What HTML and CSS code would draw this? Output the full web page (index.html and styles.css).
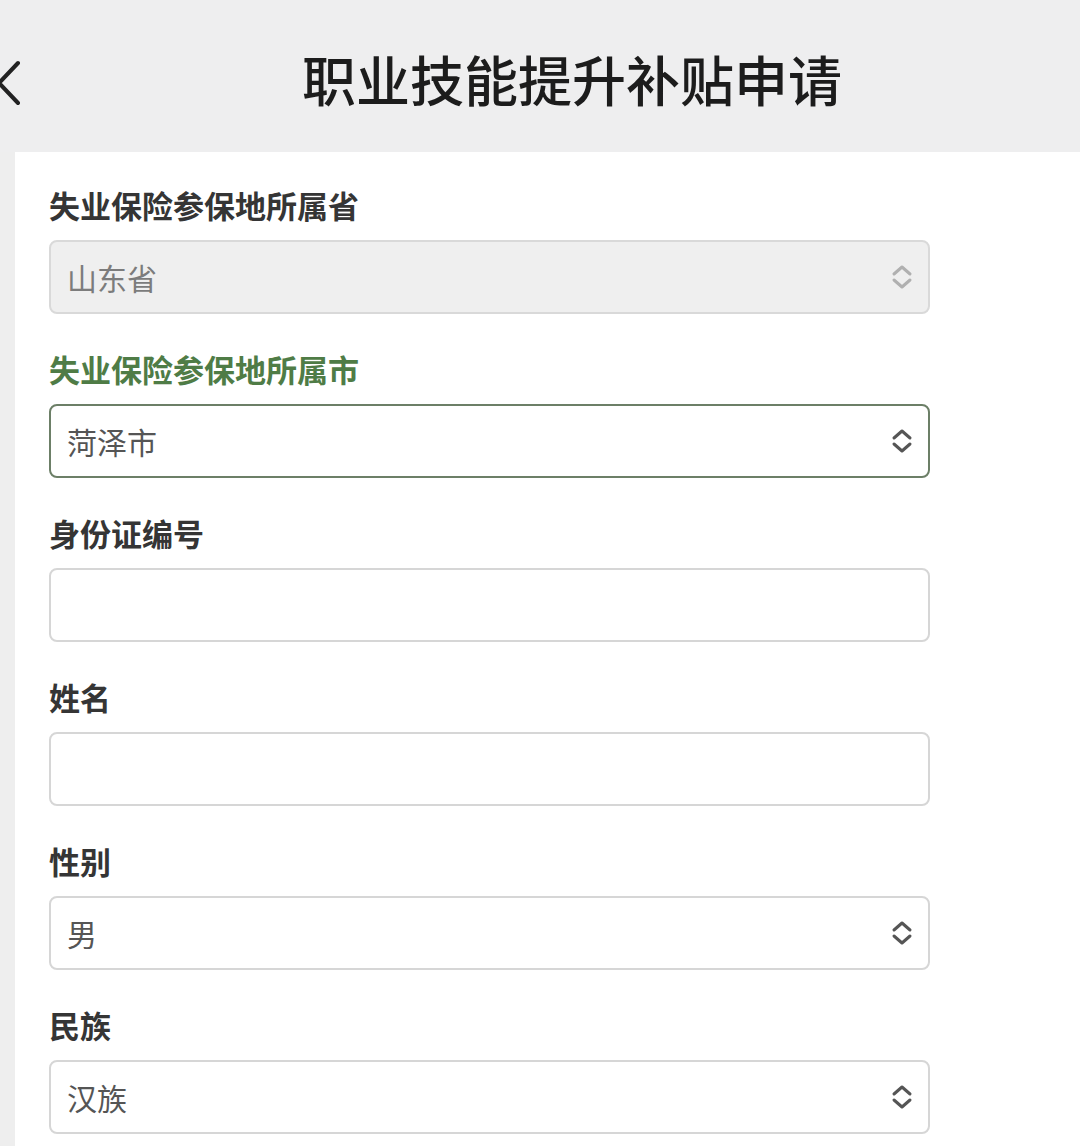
FILE: index.html
```html
<!DOCTYPE html>
<html lang="zh-CN">
<head>
<meta charset="utf-8">
<title>职业技能提升补贴申请</title>
<link rel="stylesheet" href="styles.css">
</head>
<body>
<header class="topbar">
  <svg class="back" width="24" height="46" viewBox="0 0 24 46"><polyline points="20,3 1,23 20,43" fill="none" stroke="#222" stroke-width="4" stroke-linecap="round" stroke-linejoin="round"/></svg>
  <h1 class="title">职业技能提升补贴申请</h1>
</header>
<div class="page">
  <div class="strip"></div>
  <form class="form">
    <div class="field">
      <label class="label">失业保险参保地所属省</label>
      <div class="box select disabled"><span class="value">山东省</span>
        <svg class="chev" width="22" height="26" viewBox="0 0 22 26"><polyline points="3,10 11,3 19,10" /><polyline points="3,16 11,23 19,16" /></svg></div>
    </div>
    <div class="field">
      <label class="label active">失业保险参保地所属市</label>
      <div class="box select focused"><span class="value">菏泽市</span>
        <svg class="chev" width="22" height="26" viewBox="0 0 22 26"><polyline points="3,10 11,3 19,10" /><polyline points="3,16 11,23 19,16" /></svg></div>
    </div>
    <div class="field">
      <label class="label">身份证编号</label>
      <div class="box"></div>
    </div>
    <div class="field">
      <label class="label">姓名</label>
      <div class="box"></div>
    </div>
    <div class="field">
      <label class="label">性别</label>
      <div class="box select"><span class="value">男</span>
        <svg class="chev" width="22" height="26" viewBox="0 0 22 26"><polyline points="3,10 11,3 19,10" /><polyline points="3,16 11,23 19,16" /></svg></div>
    </div>
    <div class="field">
      <label class="label">民族</label>
      <div class="box select"><span class="value">汉族</span>
        <svg class="chev" width="22" height="26" viewBox="0 0 22 26"><polyline points="3,10 11,3 19,10" /><polyline points="3,16 11,23 19,16" /></svg></div>
    </div>
  </form>
</div>
</body>
</html>
```
FILE: styles.css
```css
* { box-sizing: border-box; }
html, body { margin: 0; padding: 0; background: #ffffff; }
body {
  width: 1080px;
  height: 1146px;
  overflow: hidden;
  font-family: "Noto Sans CJK SC", "Noto Sans", sans-serif;
  color: #333;
}
.topbar {
  position: relative;
  height: 152px;
  background: #eeeeef;
  display: flex;
  align-items: center;
  justify-content: center;
  padding-left: 64px;
}
.back {
  position: absolute;
  left: -2px;
  top: 60px;
}
.title {
  margin: 0;
  font-size: 54px;
  font-weight: 500;
  color: #1c1c1c;
  line-height: 1;
  padding-top: 6px;
}
.page {
  display: flex;
  min-height: 994px;
}
.strip {
  width: 15px;
  background: #eeeeee;
  flex: none;
}
.form {
  flex: 1;
  padding: 33px 0 0 34px;
  margin: 0;
}
.field {
  width: 881px;
  margin-bottom: 35px;
}
.label {
  display: block;
  font-size: 31px;
  line-height: 40px;
  font-weight: 700;
  color: #353535;
  margin-bottom: 15px;
}
.label.active { color: #4f7c46; }
.box {
  height: 74px;
  border: 2px solid #d6d6d6;
  border-radius: 8px;
  background: #fff;
  display: flex;
  align-items: center;
  justify-content: space-between;
  padding: 0 15px 0 16px;
}
.box.disabled { background: #efefef; border-color: #d9d9d9; }
.box.focused { border-color: #6c7f67; }
.value {
  font-size: 30px;
  color: #555;
  line-height: 1;
}
.disabled .value { color: #7c7c7c; }
.chev polyline {
  fill: none;
  stroke: #555;
  stroke-width: 3;
  stroke-linecap: round;
  stroke-linejoin: round;
}
.disabled .chev polyline { stroke: #b0b0b0; }
```
